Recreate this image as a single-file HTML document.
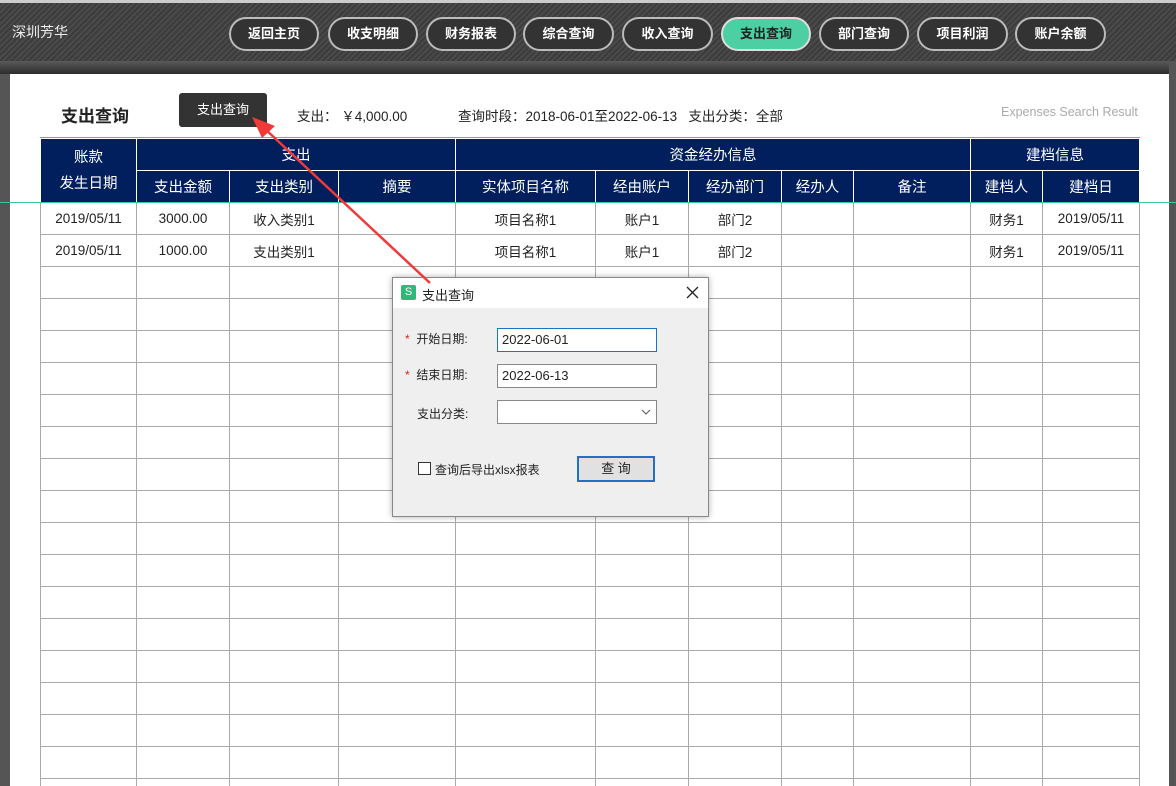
<!DOCTYPE html>
<html><head><meta charset="utf-8"><style>
*{margin:0;padding:0;box-sizing:border-box}
html,body{width:1176px;height:786px;overflow:hidden}
body{position:relative;background:#fff;font-family:"Liberation Sans","Noto Sans CJK SC",sans-serif;font-size:13px;color:#222}
.top{position:absolute;left:0;top:0;width:1176px;height:61px;background:repeating-linear-gradient(135deg,#3c3c3c 0 2px,#4a4a4a 2px 4px);border-top:3px solid #ccc}
.band{position:absolute;left:0;top:61px;width:1176px;height:13px;background:linear-gradient(#5a5a5a,#2c2c2c)}
.lside{position:absolute;left:0;top:74px;width:10px;height:712px;background:#555}
.rside{position:absolute;left:1169px;top:61px;width:7px;height:725px;background:#555}
.logo{position:absolute;left:12px;top:22px;color:#eee;font-size:14px}
.nav{position:absolute;top:17px;height:34px;border:2px solid #bbb;border-radius:17px;background:#333;color:#fff;font-weight:bold;font-size:13px;text-align:center;line-height:30px}
.nav.on{background:#4bcfa3;color:#222;border-color:#ddd}
.title{position:absolute;left:61px;top:102px;font-size:17px;font-weight:bold}
.btn{position:absolute;left:179px;top:93px;width:88px;height:34px;background:#333;color:#fff;border-radius:3px;text-align:center;line-height:34px;font-size:13px}
.info{position:absolute;top:105px;font-size:13.5px}
.eng{position:absolute;left:1001px;top:105px;color:#aaa;font-size:12.5px}
table{position:absolute;left:40px;top:138px;border-collapse:collapse;table-layout:fixed}
td,th{border:1px solid #aaa;text-align:center;height:32px;font-size:13.5px;font-weight:normal;white-space:nowrap}
th{background:#001f5c;color:#fff;border-color:#fff;font-size:14.5px}
.gl{position:absolute;left:0;width:1176px;height:1px;background:#3c9}
.dlg{position:absolute;left:392px;top:277px;width:317px;height:240px;background:#efefef;border:1px solid #888;box-shadow:0 0 6px rgba(0,0,0,.3)}
.dh{height:30px;background:#fff;position:relative}
.lb{position:absolute;font-size:12px}
.inp{position:absolute;left:104px;width:160px;height:24px;background:#fff;border:1px solid #888;font-size:13px;line-height:22px;padding-left:4px}
</style></head><body>
<div class="top"></div><div class="band"></div><div class="lside"></div><div class="rside"></div>
<div class="logo">深圳芳华</div>
<div class="nav" style="left:229px;width:90px">返回主页</div>
<div class="nav" style="left:328px;width:90px">收支明细</div>
<div class="nav" style="left:426px;width:90px">财务报表</div>
<div class="nav" style="left:523px;width:91px">综合查询</div>
<div class="nav" style="left:622px;width:91px">收入查询</div>
<div class="nav on" style="left:721px;width:90px">支出查询</div>
<div class="nav" style="left:819px;width:90px">部门查询</div>
<div class="nav" style="left:917px;width:91px">项目利润</div>
<div class="nav" style="left:1015px;width:91px">账户余额</div>
<div class="title">支出查询</div>
<div class="btn">支出查询</div>
<div class="info" style="left:297px">支出：&nbsp;￥4,000.00</div>
<div class="info" style="left:458px">查询时段：2018-06-01至2022-06-13&nbsp;&nbsp;&nbsp;支出分类：全部</div>
<div class="eng">Expenses Search Result</div>
<table>
<colgroup><col style="width:96px"><col style="width:93px"><col style="width:109px"><col style="width:117px"><col style="width:140px"><col style="width:93px"><col style="width:93px"><col style="width:72px"><col style="width:117px"><col style="width:72px"><col style="width:97px"></colgroup>
<tr><th rowspan="2" style="line-height:26px">账款<br>发生日期</th><th colspan="3">支出</th><th colspan="5">资金经办信息</th><th colspan="2">建档信息</th></tr>
<tr><th>支出金额</th><th>支出类别</th><th>摘要</th><th>实体项目名称</th><th>经由账户</th><th>经办部门</th><th>经办人</th><th>备注</th><th>建档人</th><th>建档日</th></tr>
<tr><td>2019/05/11</td><td>3000.00</td><td>收入类别1</td><td></td><td>项目名称1</td><td>账户1</td><td>部门2</td><td></td><td></td><td>财务1</td><td>2019/05/11</td></tr>
<tr><td>2019/05/11</td><td>1000.00</td><td>支出类别1</td><td></td><td>项目名称1</td><td>账户1</td><td>部门2</td><td></td><td></td><td>财务1</td><td>2019/05/11</td></tr>
<tr><td></td><td></td><td></td><td></td><td></td><td></td><td></td><td></td><td></td><td></td><td></td></tr>
<tr><td></td><td></td><td></td><td></td><td></td><td></td><td></td><td></td><td></td><td></td><td></td></tr>
<tr><td></td><td></td><td></td><td></td><td></td><td></td><td></td><td></td><td></td><td></td><td></td></tr>
<tr><td></td><td></td><td></td><td></td><td></td><td></td><td></td><td></td><td></td><td></td><td></td></tr>
<tr><td></td><td></td><td></td><td></td><td></td><td></td><td></td><td></td><td></td><td></td><td></td></tr>
<tr><td></td><td></td><td></td><td></td><td></td><td></td><td></td><td></td><td></td><td></td><td></td></tr>
<tr><td></td><td></td><td></td><td></td><td></td><td></td><td></td><td></td><td></td><td></td><td></td></tr>
<tr><td></td><td></td><td></td><td></td><td></td><td></td><td></td><td></td><td></td><td></td><td></td></tr>
<tr><td></td><td></td><td></td><td></td><td></td><td></td><td></td><td></td><td></td><td></td><td></td></tr>
<tr><td></td><td></td><td></td><td></td><td></td><td></td><td></td><td></td><td></td><td></td><td></td></tr>
<tr><td></td><td></td><td></td><td></td><td></td><td></td><td></td><td></td><td></td><td></td><td></td></tr>
<tr><td></td><td></td><td></td><td></td><td></td><td></td><td></td><td></td><td></td><td></td><td></td></tr>
<tr><td></td><td></td><td></td><td></td><td></td><td></td><td></td><td></td><td></td><td></td><td></td></tr>
<tr><td></td><td></td><td></td><td></td><td></td><td></td><td></td><td></td><td></td><td></td><td></td></tr>
<tr><td></td><td></td><td></td><td></td><td></td><td></td><td></td><td></td><td></td><td></td><td></td></tr>
<tr><td></td><td></td><td></td><td></td><td></td><td></td><td></td><td></td><td></td><td></td><td></td></tr>
<tr><td></td><td></td><td></td><td></td><td></td><td></td><td></td><td></td><td></td><td></td><td></td></tr>
<tr><td></td><td></td><td></td><td></td><td></td><td></td><td></td><td></td><td></td><td></td><td></td></tr>
<tr><td></td><td></td><td></td><td></td><td></td><td></td><td></td><td></td><td></td><td></td><td></td></tr>
</table>
<div class="gl" style="top:202px"></div>
<div style="position:absolute;left:40px;top:137px;width:1100px;height:1px;background:#3c9"></div>
<div class="dlg">
<div class="dh"><div style="position:absolute;left:8px;top:7px;width:15px;height:15px;background:#2fb878;border-radius:2px;color:#fff;font-size:11px;text-align:center;line-height:15px">S</div><div style="position:absolute;left:29px;top:7px;font-size:13px">支出查询</div>
<svg style="position:absolute;left:293px;top:8px" width="13" height="13"><path d="M1 1L12 12M12 1L1 12" stroke="#222" stroke-width="1.3"/></svg></div>
<div class="lb" style="left:12px;top:52px"><span style="color:#d22">*</span>&nbsp;&nbsp;开始日期:</div>
<div class="inp" style="top:50px;border-color:#1a73c8">2022-06-01</div>
<div class="lb" style="left:12px;top:88px"><span style="color:#d22">*</span>&nbsp;&nbsp;结束日期:</div>
<div class="inp" style="top:86px">2022-06-13</div>
<div class="lb" style="left:24px;top:127px">支出分类:</div>
<div class="inp" style="top:122px"><svg style="position:absolute;right:5px;top:8px" width="10" height="6"><path d="M1 1L5 5L9 1" stroke="#555" fill="none"/></svg></div>
<div style="position:absolute;left:25px;top:184px;width:13px;height:13px;border:1px solid #333;background:#fff"></div>
<div class="lb" style="left:42px;top:183px">查询后导出xlsx报表</div>
<div style="position:absolute;left:184px;top:178px;width:78px;height:26px;border:2px solid #1a73c8;background:#e1e1e1;text-align:center;line-height:22px;font-size:13px">查 询</div>
</div>
<svg style="position:absolute;left:0;top:0" width="1176" height="786"><line x1="430" y1="283" x2="264" y2="128" stroke="#f03a3a" stroke-width="2.5"/><path d="M252 117L275 126L262 138Z" fill="#f03a3a"/></svg>
</body></html>
